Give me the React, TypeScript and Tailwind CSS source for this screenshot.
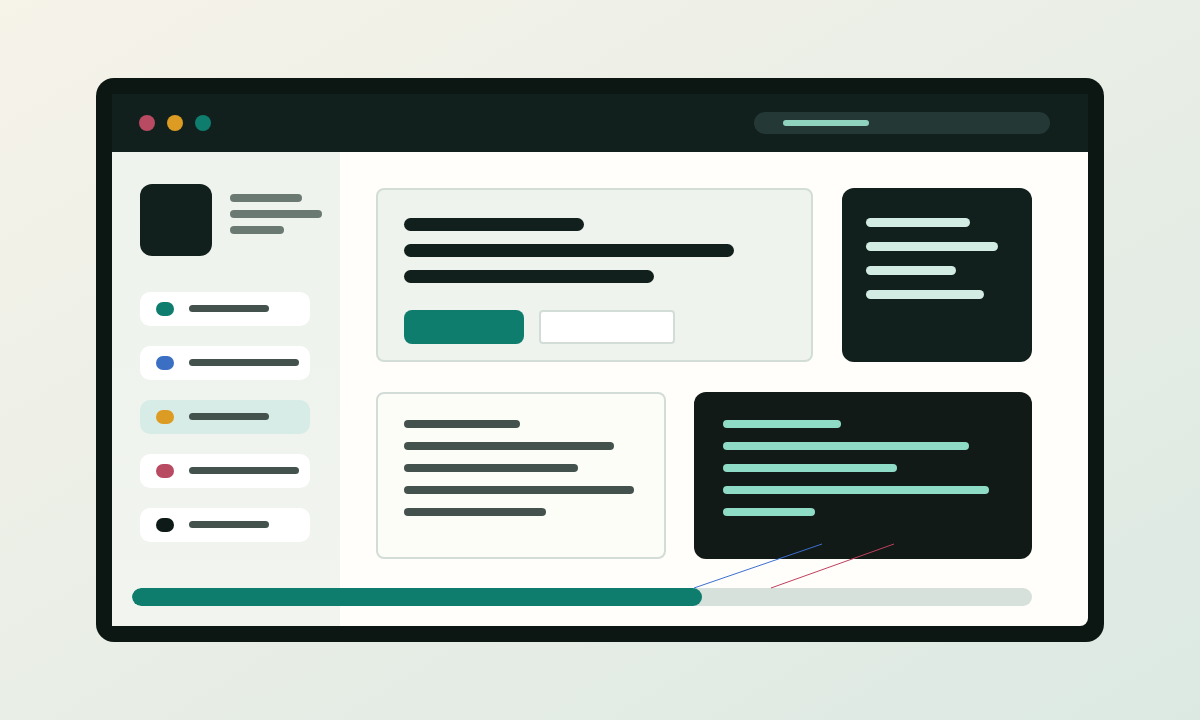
const navItems = [
  { dot: "bg-[#0f7d6d]", line: "w-[80px]", active: false },
  { dot: "bg-[#3a6fc4]", line: "w-[110px]", active: false },
  { dot: "bg-[#dc9b22]", line: "w-[80px]", active: true },
  { dot: "bg-[#b84a62]", line: "w-[110px]", active: false },
  { dot: "bg-[#0e1a17]", line: "w-[80px]", active: false },
];

const sideLines = ["w-[72px]", "w-[92px]", "w-[54px]"];
const heroLines = ["w-[180px]", "w-[330px]", "w-[250px]"];
const noteLines = ["w-[104px]", "w-[132px]", "w-[90px]", "w-[118px]"];
const listLines = ["w-[116px]", "w-[210px]", "w-[174px]", "w-[230px]", "w-[142px]"];
const codeLines = ["w-[118px]", "w-[246px]", "w-[174px]", "w-[266px]", "w-[92px]"];

export default function App() {
  const progress = 570 / 900;

  return (
    <div className="relative flex h-screen w-full items-center justify-center bg-linear-to-br from-[#f6f3e9] to-[#dce9e3] font-['Inter',sans-serif]">
      <div className="h-[564px] w-[1008px] rounded-[18px] bg-[#0c1613] p-4">
        <div className="flex h-full flex-col overflow-hidden rounded-br-lg">
          {/* title bar */}
          <div className="flex h-[58px] shrink-0 items-center justify-between bg-[#12201d] pl-[27px] pr-[38px]">
            <div className="flex gap-3">
              <span className="h-4 w-4 rounded-full bg-[#b84a62]" />
              <span className="h-4 w-4 rounded-full bg-[#dc9b22]" />
              <span className="h-4 w-4 rounded-full bg-[#0f7d6d]" />
            </div>
            <div className="flex h-[22px] w-[296px] items-center rounded-full bg-[#243835] pl-[29px]">
              <span className="h-[6px] w-[86px] rounded-full bg-[#8fd3bf]" />
            </div>
          </div>

          {/* body */}
          <div className="grid flex-1 grid-cols-[228px_1fr] grid-rows-[1fr_auto]">
            <aside className="col-start-1 row-span-2 row-start-1 bg-linear-to-b from-[#eef3ee] to-[#f1f4ef] pl-7 pt-8">
              <div className="flex gap-[18px]">
                <div className="h-[72px] w-[72px] rounded-xl bg-[#12201d]" />
                <div className="mt-[10px] flex flex-col gap-2">
                  {sideLines.map((w, i) => (
                    <span key={i} className={`h-2 ${w} rounded-full bg-[#6a7a73]`} />
                  ))}
                </div>
              </div>
              <nav className="mt-9 flex flex-col gap-5">
                {navItems.map((item, i) => (
                  <div
                    key={i}
                    className={`flex h-[34px] w-[170px] items-center gap-[15px] rounded-[10px] pl-4 ${
                      item.active ? "bg-[#d7ece6]" : "bg-white"
                    }`}
                  >
                    <span className={`h-[14px] w-[18px] rounded-full ${item.dot}`} />
                    <span className={`-mt-[2px] h-[7px] ${item.line} rounded-full bg-[#43524d]`} />
                  </div>
                ))}
              </nav>
            </aside>

            <main className="col-start-2 row-span-2 row-start-1 bg-[#fffefa] pl-9 pt-9">
              <div className="flex gap-[29px]">
                <section className="flex h-[174px] w-[437px] flex-col rounded-lg border-2 border-[#d3ddd7] bg-[#eef3ee] pl-[26px] pt-7">
                  <div className="flex flex-col gap-[13px]">
                    {heroLines.map((w, i) => (
                      <span key={i} className={`h-[13px] ${w} rounded-full bg-[#12201d]`} />
                    ))}
                  </div>
                  <div className="mt-[27px] flex gap-[15px]">
                    <span className="h-[34px] w-[120px] rounded-lg bg-[#0f7d6d]" />
                    <span className="h-[34px] w-[136px] rounded border-2 border-[#d3ddd7] bg-white" />
                  </div>
                </section>
                <section className="h-[174px] w-[190px] rounded-xl bg-[#12201d] pl-6 pt-[30px]">
                  <div className="flex flex-col gap-[15px]">
                    {noteLines.map((w, i) => (
                      <span key={i} className={`h-[9px] ${w} rounded-full bg-[#d2ece4]`} />
                    ))}
                  </div>
                </section>
              </div>

              <div className="mt-[30px] flex gap-[28px]">
                <section className="h-[167px] w-[290px] rounded-lg border-2 border-[#d3ddd7] bg-[#fdfdf8] pl-[26px] pt-[26px]">
                  <div className="flex flex-col gap-[14px]">
                    {listLines.map((w, i) => (
                      <span key={i} className={`h-2 ${w} rounded-full bg-[#43524d]`} />
                    ))}
                  </div>
                </section>
                <section className="h-[167px] w-[338px] rounded-xl bg-[#121a17] pl-[29px] pt-7">
                  <div className="flex flex-col gap-[14px]">
                    {codeLines.map((w, i) => (
                      <span key={i} className={`h-2 ${w} rounded-full bg-[#8fdcc6]`} />
                    ))}
                  </div>
                </section>
              </div>
            </main>

            <div className="z-10 col-span-2 col-start-1 row-start-2 mb-5 ml-5 w-[900px]">
              <div className="h-[18px] w-full overflow-hidden rounded-full bg-[#d6e1dc]">
                <div className="h-full rounded-full bg-[#0f7d6d]" style={{ width: `${progress * 100}%` }} />
              </div>
            </div>
          </div>
        </div>
      </div>

      <svg className="pointer-events-none absolute left-0 top-0 z-20" width="1200" height="720" viewBox="0 0 1200 720">
        <line x1="694" y1="588" x2="822" y2="544" stroke="#3b6fd0" strokeWidth="1" />
        <line x1="771" y1="588" x2="894" y2="544" stroke="#c0405e" strokeWidth="1" />
      </svg>
    </div>
  );
}
